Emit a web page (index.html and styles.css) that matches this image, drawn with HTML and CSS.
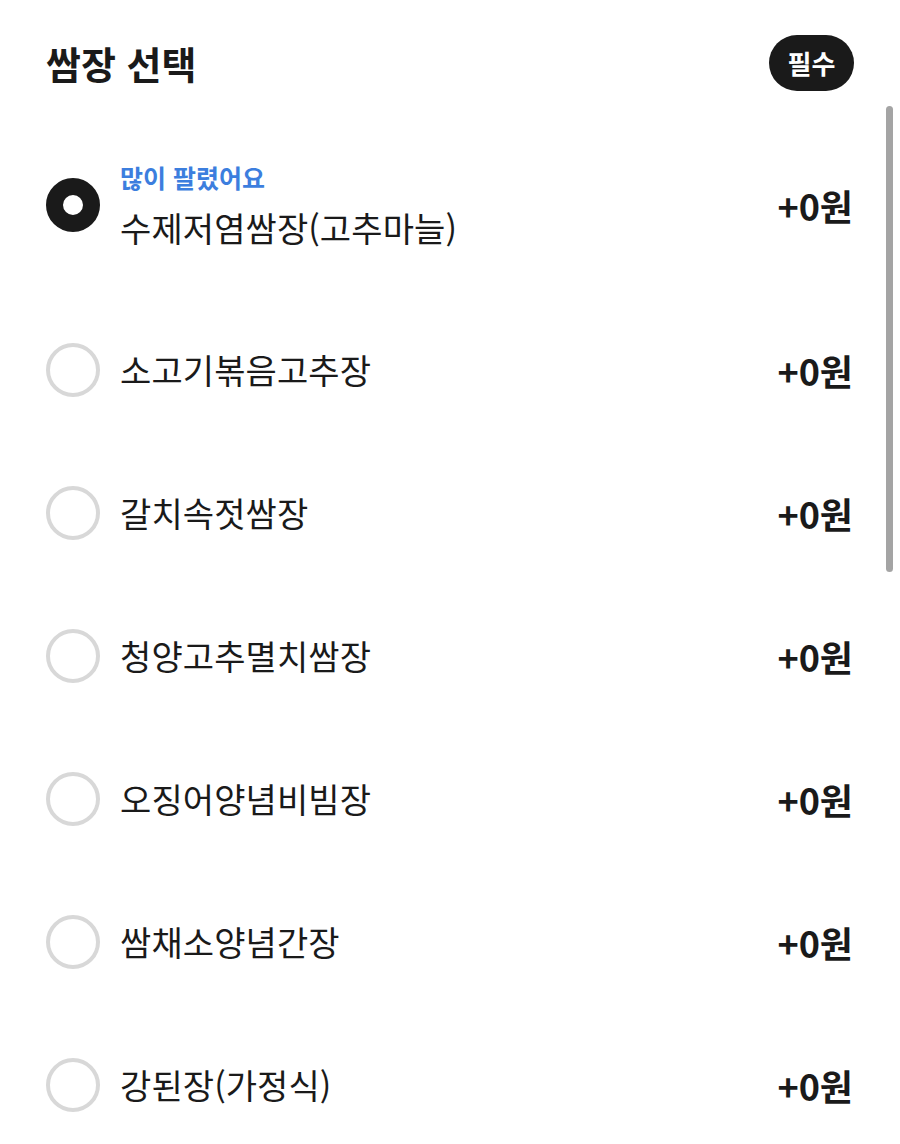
FILE: index.html
```html
<!DOCTYPE html>
<html lang="ko">
<head>
<meta charset="utf-8">
<link rel="stylesheet" href="styles.css">
</head>
<body>
<div class="page">
  <div class="header">
    <h2 class="title">쌈장 선택</h2>
    <span class="badge">필수</span>
  </div>
  <ul class="list">
    <li class="row first">
      <span class="radio selected"></span>
      <div class="text">
        <span class="tag">많이 팔렸어요</span>
        <span class="name">수제저염쌈장(고추마늘)</span>
      </div>
      <span class="price">+0원</span>
    </li>
    <li class="row">
      <span class="radio"></span>
      <div class="text"><span class="name">소고기볶음고추장</span></div>
      <span class="price">+0원</span>
    </li>
    <li class="row">
      <span class="radio"></span>
      <div class="text"><span class="name">갈치속젓쌈장</span></div>
      <span class="price">+0원</span>
    </li>
    <li class="row">
      <span class="radio"></span>
      <div class="text"><span class="name">청양고추멸치쌈장</span></div>
      <span class="price">+0원</span>
    </li>
    <li class="row">
      <span class="radio"></span>
      <div class="text"><span class="name">오징어양념비빔장</span></div>
      <span class="price">+0원</span>
    </li>
    <li class="row">
      <span class="radio"></span>
      <div class="text"><span class="name">쌈채소양념간장</span></div>
      <span class="price">+0원</span>
    </li>
    <li class="row">
      <span class="radio"></span>
      <div class="text"><span class="name">강된장(가정식)</span></div>
      <span class="price">+0원</span>
    </li>
  </ul>
  <div class="scrollbar"></div>
</div>
</body>
</html>
```
FILE: styles.css
```css
* { box-sizing: border-box; }
html, body { margin: 0; padding: 0; background: #fff; }
body {
  font-family: "Noto Sans CJK KR", "Noto Sans", sans-serif;
  color: #1a1a1a;
}
.page {
  position: relative;
  width: 900px;
  height: 1144px;
  overflow: hidden;
}
.header {
  display: flex;
  align-items: center;
  justify-content: space-between;
  height: 112px;
  padding: 35px 46px 21px 46px;
}
.title {
  margin: 0;
  font-size: 38px;
  font-weight: 700;
  line-height: 56px;
}
.badge {
  display: inline-flex;
  align-items: center;
  justify-content: center;
  width: 85px;
  height: 56px;
  border-radius: 28px;
  background: #1a1a1a;
  color: #fff;
  font-size: 26px;
  font-weight: 700;
  line-height: 56px;
}
.list {
  list-style: none;
  margin: 0;
  padding: 0 47px 0 46px;
}
.row {
  display: flex;
  align-items: center;
  height: 143px;
  overflow: hidden;
}
.row.first {
  height: 186px;
}
.radio {
  flex: none;
  width: 54px;
  height: 54px;
  border-radius: 50%;
  border: 4px solid #d8d8d8;
  margin-right: 20px;
}
.radio.selected {
  border: 17px solid #1a1a1a;
  background: #fff;
}
.text {
  flex: 1;
  display: flex;
  flex-direction: column;
}
.tag {
  font-size: 25px;
  font-weight: 700;
  color: #3c7ede;
  line-height: 32px;
  margin-bottom: 13px;
}
.name {
  font-size: 34px;
  line-height: 44px;
  font-weight: 400;
  letter-spacing: 0.1px;
}
.price {
  font-size: 36px;
  font-weight: 700;
  line-height: 44px;
}
.scrollbar {
  position: absolute;
  right: 7px;
  top: 106px;
  width: 7px;
  height: 466px;
  border-radius: 4px;
  background: #a4a4a4;
}
```
